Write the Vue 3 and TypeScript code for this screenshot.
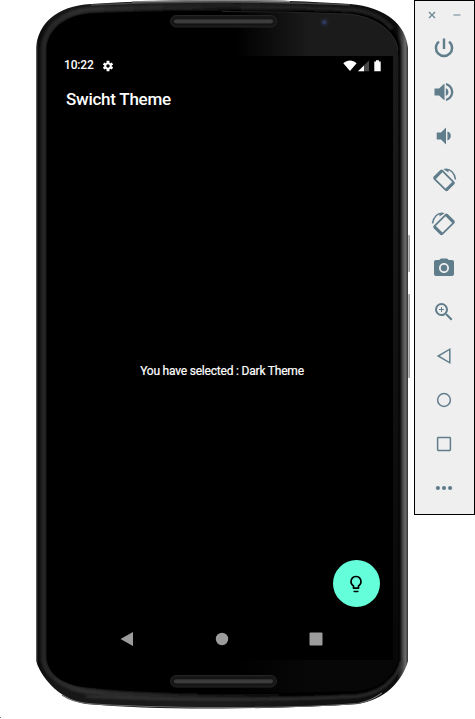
<script setup lang="ts">
interface Tool {
  name: string
  kind: 'fill' | 'line' | 'rotate'
  d: string
}

const tools: Tool[] = [
  { name: 'Power', kind: 'fill', d: 'M13.2 2.500h-2.400v10.500h2.400V2.500zm4.630 2.370l-1.600 1.600A6.920 6.920 0 0 1 18.800 12a6.800 6.800 0 0 1-13.600 0c0-2.250 1-4.250 2.600-5.500L6.170 4.870A9.300 9.300 0 0 0 2.700 12a9.300 9.300 0 0 0 18.600 0c0-2.840-1.330-5.480-3.470-7.130z' },
  { name: 'Volume up', kind: 'fill', d: 'M2.500 8.500v7h4.500l5.500 5V3.500L7 8.500H2.500zm14 3.500A4.500 4.500 0 0 0 13.800 7.970v8.050c1.700-.730 2.700-2.250 2.700-4.020zM14 3v2.300c2.890.860 5 3.540 5 6.700s-2.110 5.850-5 6.700V21c4.200-.910 7.300-4.690 7.300-9S18.200 3.900 14 3z' },
  { name: 'Volume down', kind: 'fill', d: 'M18.800 12A4.500 4.500 0 0 0 15.400 7.500v9c2-.7 3.400-2.500 3.400-4.500zM4.700 8.600v6.800h4.300l5 5V3.600l-5 5H4.700z' },
  { name: 'Rotate left', kind: 'rotate', d: '' },
  { name: 'Rotate right', kind: 'rotate', d: 'mirror' },
  { name: 'Screenshot', kind: 'fill', d: 'M12 8.800a3.200 3.200 0 1 0 0 6.400 3.200 3.200 0 0 0 0-6.400zM9 2.500L7.170 4H4c-1.100 0-2 .9-2 2v12c0 1.100.9 2 2 2h16c1.100 0 2-.9 2-2V6c0-1.100-.9-2-2-2h-3.170L15 2.500H9zm3 14.500c-2.760 0-5-2.240-5-5s2.240-5 5-5 5 2.240 5 5-2.240 5-5 5z' },
  { name: 'Zoom', kind: 'fill', d: 'M15.500 14h-.79l-.28-.27A6.471 6.471 0 0 0 16 9.500 6.500 6.500 0 1 0 9.500 16c1.610 0 3.090-.59 4.230-1.570l.27.28v.79l5 4.990L20.490 19l-4.990-5zm-6 0C7.010 14 5 11.990 5 9.500S7.010 5 9.500 5 14 7.010 14 9.500 11.990 14 9.500 14zm2.500-4h-2v2H9v-2H7V9h2V7h1v2h2v1z' },
  { name: 'Back', kind: 'line', d: 'M17.800 5.200v13.600L6.200 12z' },
  { name: 'Home', kind: 'line', d: 'M5.600 12a6.400 6.400 0 1 0 12.800 0a6.400 6.400 0 1 0-12.800 0z' },
  { name: 'Overview', kind: 'line', d: 'M6.300 5.600h11.400q.7 0 .7.700v11.400q0 .7-.7.700H6.300q-.7 0-.7-.700V6.300q0-.7.700-.700z' },
  { name: 'More', kind: 'fill', d: 'M3.800 12a2.100 2.100 0 1 0 4.200 0a2.100 2.100 0 1 0-4.200 0zM9.900 12a2.100 2.100 0 1 0 4.200 0a2.100 2.100 0 1 0-4.200 0zM16 12a2.100 2.100 0 1 0 4.200 0a2.100 2.100 0 1 0-4.200 0z' },
]
</script>

<template>
  <main class="stage">
    <section class="phone">
      <svg class="shell" viewBox="0 0 414 719" aria-hidden="true">
        <defs>
          <linearGradient id="rim" x1="36" x2="408" y1="0" y2="0" gradientUnits="userSpaceOnUse">
            <stop offset="0" stop-color="#777" />
            <stop offset=".005" stop-color="#0a0a0a" />
            <stop offset=".04" stop-color="#161616" />
            <stop offset=".5" stop-color="#1c1c1c" />
            <stop offset=".97" stop-color="#0c0c0c" />
            <stop offset=".985" stop-color="#444" />
            <stop offset=".993" stop-color="#6a6a6a" />
            <stop offset="1" stop-color="#333" />
          </linearGradient>
          <linearGradient id="gloss" x1="235" x2="310" y1="0" y2="0" gradientUnits="userSpaceOnUse">
            <stop offset="0" stop-color="#1b1b1b" stop-opacity="0" />
            <stop offset="1" stop-color="#1b1b1b" />
          </linearGradient>
          <linearGradient id="chin" x1="235" x2="310" y1="0" y2="0" gradientUnits="userSpaceOnUse">
            <stop offset="0" stop-color="#070707" stop-opacity="0" />
            <stop offset="1" stop-color="#070707" />
          </linearGradient>
          <linearGradient id="strip" x1="0" x2="0" y1="56" y2="660" gradientUnits="userSpaceOnUse">
            <stop offset="0" stop-color="#1b1b1b" />
            <stop offset="1" stop-color="#070707" />
          </linearGradient>
          <linearGradient id="bevel" x1="40" x2="300" y1="0" y2="0" gradientUnits="userSpaceOnUse">
            <stop offset="0" stop-color="#242424" />
            <stop offset=".15" stop-color="#303030" />
            <stop offset=".6" stop-color="#202020" />
            <stop offset="1" stop-color="#202020" stop-opacity="0" />
          </linearGradient>
          <linearGradient id="slot" x1="0" x2="0" y1="0" y2="1">
            <stop offset="0" stop-color="#242424" />
            <stop offset=".5" stop-color="#404040" />
            <stop offset="1" stop-color="#303030" />
          </linearGradient>
          <linearGradient id="edge" x1="0" x2="1" y1="0" y2="0">
            <stop offset="0" stop-color="#777" />
            <stop offset=".5" stop-color="#bbb" />
            <stop offset="1" stop-color="#888" />
          </linearGradient>
          <filter id="soft" x="-5%" y="-5%" width="110%" height="110%"><feGaussianBlur stdDeviation=".8" /></filter>
        </defs>
        <rect x="407" y="235" width="3" height="37" rx="1" fill="url(#edge)" />
        <rect x="407" y="294" width="3" height="84" rx="1" fill="url(#edge)" />
        <path d="M36 48C38 24 56 6 91 4Q150 0 222 0T350 4C386 7 406 25 408 48V661C402 682 384 700 358 704Q300 708 222 708.500T86 704C63 700 43 682 36 661Z" fill="url(#rim)" />
        <path d="M132 2Q170 .8 222 .8T290 1.800" fill="none" stroke="#858585" stroke-width="1.700" />
        <path d="M91 5Q150 2 222 2T350 5" fill="none" stroke="#4a4a4a" stroke-width="1.500" />
        <path d="M62 695Q72 702 88 703.500Q140 707.300 222 707.500T358 703.500Q371 701 382 693" fill="none" stroke="#6a6a6a" stroke-width="1.200" />
        <g filter="url(#soft)">
          <path d="M43.500 660V48C45 28 63 11.500 91 9.500Q150 7 222 7T350 9.500C378 12 399 28 400.500 48V660C396 679 379 691 357 694Q300 697.500 222 697.500T86 692C63 689 47 677 43.500 660Z" fill="#000" />
          <path d="M350 692.500Q290 697.500 222 697.500Q138 697 86 691C64 688 47 676 43.500 660V48C45 28 63 11.500 91 9.500Q150 7 222 7T350 9.500" fill="none" stroke="url(#bevel)" stroke-width="5.500" />
          <path d="M240 7Q296 7 350 9.500C370 11 384 18 392 29" fill="none" stroke="#222" stroke-width="4" />
          <path d="M86 696.500Q140 699.500 222 699.500T357 696.500C380 694 396 681 402 661" fill="none" stroke="#363636" stroke-width="1.800" />
        </g>
        <path d="M46.500 657V48C48 29 66 15 92 13.500Q150 11 222 11T348 13.500C374 15 396 29 398 48V657C393 677 378 689 356 691Q300 693 222 693T84 687C63 684 48 676 46.500 657Z" fill="#000" />
        <path d="M222 12Q286 12 348 14C374 16 396 31 398 50V56H222Z" fill="url(#gloss)" />
        <path d="M222 11.500Q286 11.500 348 14C374 16 396 31 398 50" fill="none" stroke="#333" stroke-width=".7" />
        <path d="M393 55h5.500V660H393Z" fill="url(#strip)" />
        <path d="M222 660H398.500C392 680 376 690 354 691Q290 693 222 693Z" fill="url(#chin)" />
        <g fill="#171717" stroke="#242424">
          <rect x="170.500" y="15.500" width="106" height="11.500" rx="5.750" />
          <rect x="170.500" y="675.500" width="106" height="11.500" rx="5.750" />
        </g>
        <g fill="url(#slot)" stroke="#101010" stroke-width=".8">
          <rect x="173.500" y="18.500" width="100" height="5.500" rx="2.750" />
          <rect x="173.500" y="678.500" width="100" height="5.500" rx="2.750" />
        </g>
        <circle cx="324.500" cy="22.500" r="4.500" fill="#20222a" />
        <circle cx="324.300" cy="22.300" r="2.300" fill="#30375c" />
        <rect x="0" y="717" width="1" height="1" fill="#777" />
      </svg>

      <div class="screen">
        <header class="status">
          <span class="clock">10:22</span>
          <svg class="gear" viewBox="0 0 24 24"><path fill="#fff" fill-rule="evenodd" d="M19.400 13a7.500 7.500 0 0 0 0-2l2.800-1.700-2.500-4.400-3 1.500a7.500 7.500 0 0 0-1.700-1L14.800 1.500H9.200L9 5.400a7.500 7.500 0 0 0-1.700 1l-3-1.500-2.500 4.400L4.600 11a7.500 7.500 0 0 0 0 2l-2.800 1.700 2.500 4.400 3-1.500a7.500 7.500 0 0 0 1.700 1l.2 3.900h5.600l.2-3.900a7.500 7.500 0 0 0 1.700-1l3 1.500 2.500-4.400zM12 15.500a3.500 3.500 0 1 1 0-7 3.500 3.500 0 0 1 0 7z" /></svg>
          <svg class="signals" viewBox="0 0 40 12">
            <path d="M.3 3.200C4.500-.3 9.500-.3 13.600 3.200L7 11z" fill="#fff" />
            <path d="M26 .5V11.200H15z" fill="#484848" />
            <path d="M21 5.400V11.200H15z" fill="#fff" />
            <path d="M33 .3h3v1.200h1.700V11.200h-6.400V1.500H33z" fill="#fff" />
          </svg>
        </header>
        <h1 class="title">Swicht Theme</h1>
        <p class="message">You have selected : Dark Theme</p>
        <div class="actions">
          <button class="fab" aria-label="Switch theme">
            <svg viewBox="0 0 24 24"><path d="M9 21c0 .5.400 1 1 1h4c.600 0 1-.500 1-1v-1H9v1zm3-19a7 7 0 0 0-4 12.700V17c0 .500.400 1 1 1h6c.600 0 1-.500 1-1v-2.300A7 7 0 0 0 12 2zm2.850 11.100l-.850.600V16h-4v-2.300l-.850-.600A5 5 0 1 1 14.850 13.100z" /></svg>
          </button>
        </div>
        <nav class="nav">
          <svg viewBox="0 0 14 14"><path d="M.5 7L13 0V14z" /></svg>
          <svg viewBox="0 0 14 14"><circle cx="7" cy="7" r="6.200" /></svg>
          <svg viewBox="0 0 14 14"><rect x=".5" y=".5" width="13" height="13" rx="1" /></svg>
        </nav>
      </div>
    </section>

    <aside class="toolbar">
      <div class="window-controls">
        <svg viewBox="0 0 8 8"><path d="M1 1l6 6M7 1L1 7" stroke="#6c8792" stroke-width="1.300" /></svg>
        <svg viewBox="0 0 8 8"><path d="M.5 4h7" stroke="#9badb5" stroke-width="1.600" /></svg>
      </div>
      <button v-for="tool in tools" :key="tool.name" class="tool" :aria-label="tool.name">
        <svg viewBox="0 0 24 24">
          <g v-if="tool.kind === 'rotate'" :transform="tool.d === 'mirror' ? 'matrix(-1 0 0 1 24 0)' : undefined">
            <g transform="translate(12 12.400) rotate(45)">
              <rect x="-9" y="-5.600" width="18" height="11.200" rx="1.100" fill="none" stroke="#607d8b" stroke-width="1.800" />
              <path d="M-8.300-5v10M8.300-5v10" stroke="#607d8b" stroke-width="3" />
            </g>
            <path d="M12.500 1.500C18.500.500 22.800 5 23.500 11.500" fill="none" stroke="#607d8b" stroke-width="1.500" />
            <path d="M11.300 1l5.200-.1v3.600z" fill="#607d8b" />
          </g>
          <path v-else :class="tool.kind" :d="tool.d" />
        </svg>
      </button>
    </aside>
  </main>
</template>

<style>
body {
  margin: 0;
  background: #fff;
}
</style>

<style scoped>
.stage {
  display: flex;
  align-items: flex-start;
  width: 475px;
  height: 719px;
  overflow: hidden;
  background: #fff;
  font-family: Roboto, "Liberation Sans", sans-serif;
}
.phone {
  position: relative;
  box-sizing: border-box;
  width: 414px;
  height: 719px;
  padding: 56px 21px 59px 47px;
}
.shell {
  position: absolute;
  inset: 0;
  width: 414px;
  height: 719px;
}
.screen {
  position: relative;
  display: flex;
  flex-direction: column;
  height: 604px;
  background: #000;
  color: #fff;
}
.status {
  display: flex;
  align-items: center;
  height: 19px;
  padding: 0 10px 0 17px;
}
.clock {
  font-size: 12px;
  font-weight: 500;
  line-height: 19px;
  letter-spacing: -0.15px;
}
.gear {
  width: 12px;
  height: 12px;
  margin-left: 8.5px;
}
.signals {
  width: 40px;
  height: 12px;
  margin-left: auto;
}
.title {
  margin: 14px 0 0 19px;
  font-size: 17px;
  font-weight: 500;
  line-height: 20px;
  letter-spacing: -0.25px;
}
.message {
  flex: 1;
  display: flex;
  align-items: center;
  justify-content: center;
  margin: 0;
  padding: 73px 0 0 4px;
  font-size: 12px;
  line-height: 14px;
  letter-spacing: -0.2px;
  -webkit-text-stroke: 0.2px #fff;
}
.actions {
  display: flex;
  justify-content: flex-end;
  padding-right: 13px;
}
.fab {
  display: grid;
  place-items: center;
  width: 47px;
  height: 47px;
  padding: 0 1px 0 0;
  border: 0;
  border-radius: 50%;
  background: #64ffda;
}
.fab svg {
  width: 20px;
  height: 20px;
}
.nav {
  display: flex;
  align-items: center;
  justify-content: space-between;
  height: 42px;
  margin-top: 11px;
  padding: 0 70px 0 73px;
}
.nav svg {
  width: 14px;
  height: 14px;
  fill: #9c9c9c;
}
.toolbar {
  box-sizing: border-box;
  display: flex;
  flex-direction: column;
  align-items: center;
  width: 61px;
  height: 515px;
  padding-right: 1px;
  border: 1px solid #000;
  background: #efefef;
}
.window-controls {
  display: flex;
  gap: 17px;
  padding-top: 10px;
  height: 15px;
}
.window-controls svg {
  width: 8px;
  height: 8px;
}
.tool {
  display: grid;
  place-items: center;
  width: 44px;
  height: 44px;
  padding: 0;
  border: 0;
  background: none;
}
.tool svg {
  width: 24px;
  height: 24px;
  overflow: visible;
}
.fill {
  fill: #607d8b;
}
.line {
  fill: none;
  stroke: #607d8b;
  stroke-width: 1.5;
}
</style>
